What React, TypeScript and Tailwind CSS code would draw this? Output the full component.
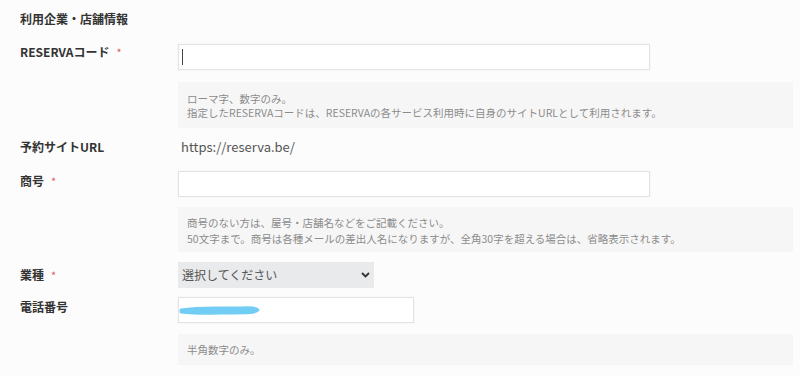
const font = { fontFamily: '"Noto Sans CJK JP", "Noto Sans", sans-serif' };

function Label({ text, required }: { text: string; required?: boolean }) {
  return (
    <div className="flex w-[158px] shrink-0 items-center text-[12px] font-bold leading-[16px] text-[#333]">
      <span>{text}</span>
      {required && <span className="ml-[7px] text-[11px] font-normal text-[#e06060]">*</span>}
    </div>
  );
}

export default function App() {
  return (
    <div style={font} className="h-[376px] w-[800px] overflow-hidden bg-[#fcfcfc] pl-[20px]">
      <h2 className="pt-[11px] text-[12px] font-bold leading-[16px] text-[#333]">利用企業・店舗情報</h2>

      <div className="mt-[17px] flex items-start">
        <Label text="RESERVAコード" required />
        <div className="flex h-[26px] w-[472px] items-center border border-[#e3e3e3] bg-white pl-[3px] shadow-[0_0_2px_rgba(0,0,0,0.06)]">
          <span className="h-[16px] w-[1px] bg-[#444]" />
        </div>
      </div>
      <div className="ml-[158px] mr-[7px] mt-[12px] bg-[#f6f6f6] px-[9px] pb-[8px] pt-[10px] text-[10.5px] leading-[14px] text-[#8c8c8c]">
        <p>ローマ字、数字のみ。</p>
        <p>指定したRESERVAコードは、RESERVAの各サービス利用時に自身のサイトURLとして利用されます。</p>
      </div>

      <div className="mt-[11px] flex items-center">
        <Label text="予約サイトURL" />
        <span className="ml-[3px] text-[13px] leading-[16px] text-[#555]">https://reserva.be/</span>
      </div>

      <div className="mt-[16px] flex items-start">
        <div className="pt-[2px]">
          <Label text="商号" required />
        </div>
        <div className="h-[26px] w-[472px] border border-[#e3e3e3] bg-white shadow-[0_0_2px_rgba(0,0,0,0.06)]" />
      </div>
      <div className="ml-[158px] mr-[7px] mt-[10px] bg-[#f6f6f6] px-[9px] pb-[5px] pt-[8px] text-[10.5px] leading-[16px] text-[#8c8c8c]">
        <p>商号のない方は、屋号・店舗名などをご記載ください。</p>
        <p>50文字まで。商号は各種メールの差出人名になりますが、全角30字を超える場合は、省略表示されます。</p>
      </div>

      <div className="mt-[10px] flex items-center">
        <Label text="業種" required />
        <div className="flex h-[26px] w-[196px] items-center justify-between bg-[#e9eaec] pl-[4px] pr-[4px] text-[12px] text-[#555]">
          <span>選択してください</span>
          <svg width="9" height="6" viewBox="0 0 9 6">
            <path d="M1 1l3.5 3.5L8 1" fill="none" stroke="#333" strokeWidth="1.8" />
          </svg>
        </div>
      </div>

      <div className="mt-[9px] flex items-start">
        <div className="pt-[2px]">
          <Label text="電話番号" />
        </div>
        <div className="flex h-[26px] w-[236px] items-center border border-[#e3e3e3] bg-white shadow-[0_0_2px_rgba(0,0,0,0.06)]">
          <svg width="84" height="12" viewBox="0 0 84 12" className="-ml-[1px]">
            <path
              d="M3 6 C 20 3, 40 4, 55 4 C 68 4, 78 3, 80 6 C 78 9, 68 9, 55 9 C 40 9, 20 10, 3 8 Z"
              fill="#72cdf4"
              stroke="#72cdf4"
              strokeWidth="3"
              strokeLinejoin="round"
            />
          </svg>
        </div>
      </div>
      <div className="ml-[158px] mr-[7px] mt-[11px] flex h-[31px] items-center bg-[#f6f6f6] px-[9px] text-[10.5px] text-[#8c8c8c]">
        半角数字のみ。
      </div>
    </div>
  );
}
